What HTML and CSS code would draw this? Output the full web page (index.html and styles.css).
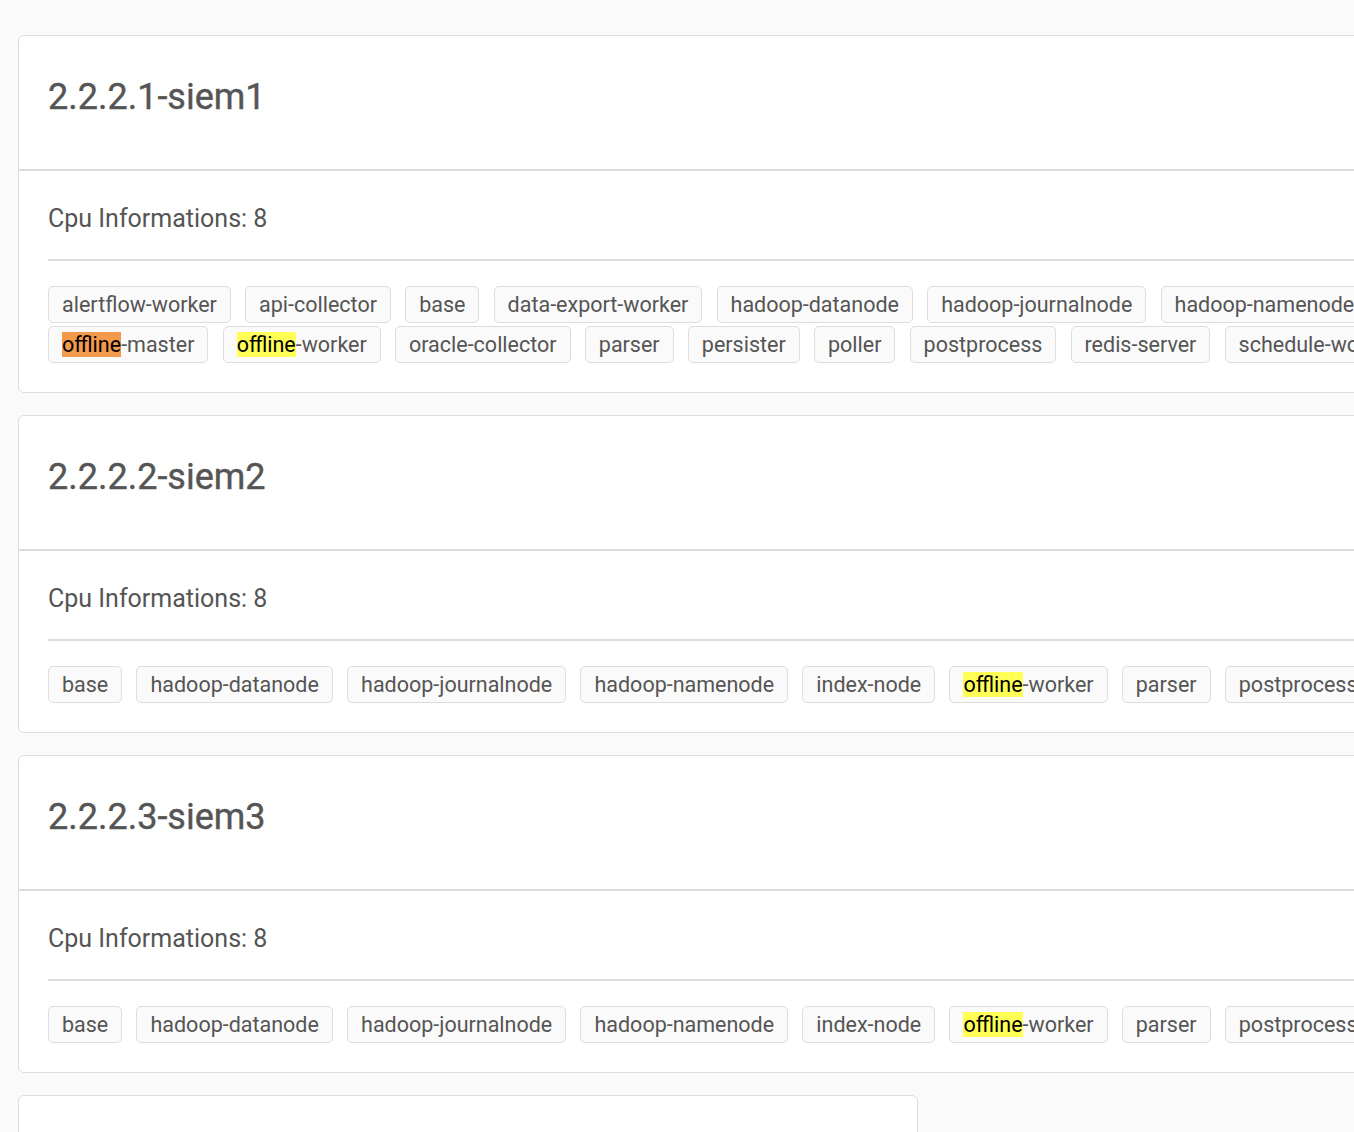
FILE: index.html
```html
<!DOCTYPE html>
<html>
<head>
<meta charset="utf-8">
<link rel="stylesheet" href="styles.css">
</head>
<body>
<div class="page">
  <section class="card card-wide">
    <header class="card-head"><h2 class="card-title">2.2.2.1-siem1</h2></header>
    <div class="card-body">
      <div class="info">Cpu Informations: 8</div>
      <div class="tags">
        <span class="tag">alertflow-worker</span>
        <span class="tag">api-collector</span>
        <span class="tag">base</span>
        <span class="tag">data-export-worker</span>
        <span class="tag">hadoop-datanode</span>
        <span class="tag">hadoop-journalnode</span>
        <span class="tag">hadoop-namenode</span>
        <span class="tag">index-node</span>
        <span class="tag"><mark class="hl hl-current">offline</mark>-master</span>
        <span class="tag"><mark class="hl">offline</mark>-worker</span>
        <span class="tag">oracle-collector</span>
        <span class="tag">parser</span>
        <span class="tag">persister</span>
        <span class="tag">poller</span>
        <span class="tag">postprocess</span>
        <span class="tag">redis-server</span>
        <span class="tag">schedule-worker</span>
        <span class="tag">web</span>
      </div>
    </div>
  </section>
  <section class="card card-wide">
    <header class="card-head"><h2 class="card-title">2.2.2.2-siem2</h2></header>
    <div class="card-body">
      <div class="info">Cpu Informations: 8</div>
      <div class="tags">
        <span class="tag">base</span>
        <span class="tag">hadoop-datanode</span>
        <span class="tag">hadoop-journalnode</span>
        <span class="tag">hadoop-namenode</span>
        <span class="tag">index-node</span>
        <span class="tag"><mark class="hl">offline</mark>-worker</span>
        <span class="tag">parser</span>
        <span class="tag">postprocess</span>
      </div>
    </div>
  </section>
  <section class="card card-wide">
    <header class="card-head"><h2 class="card-title">2.2.2.3-siem3</h2></header>
    <div class="card-body">
      <div class="info">Cpu Informations: 8</div>
      <div class="tags">
        <span class="tag">base</span>
        <span class="tag">hadoop-datanode</span>
        <span class="tag">hadoop-journalnode</span>
        <span class="tag">hadoop-namenode</span>
        <span class="tag">index-node</span>
        <span class="tag"><mark class="hl">offline</mark>-worker</span>
        <span class="tag">parser</span>
        <span class="tag">postprocess</span>
      </div>
    </div>
  </section>
  <section class="card card-narrow">
    <header class="card-head"><h2 class="card-title">&nbsp;</h2></header>
  </section>
</div>
</body>
</html>
```
FILE: styles.css
```css
html, body {
  margin: 0;
  padding: 0;
  background: #fafafa;
  overflow-x: hidden;
}
body {
  font-family: Roboto, "Liberation Sans", Arial, sans-serif;
  color: #555;
}
.page {
  padding: 35px 0 40px 18px;
  display: flex;
  flex-direction: column;
  gap: 22px;
  align-items: flex-start;
}
.card {
  background: #fff;
  border: 1px solid #ddd;
  border-radius: 6px;
  box-sizing: border-box;
  flex-shrink: 0;
}
.card-wide { width: 1580px; }
.card-narrow { width: 900px; }
.card-head {
  padding: 40px 29px 51px;
  border-bottom: 2px solid #ddd;
}
.card-title {
  margin: 0;
  font-size: 36px;
  line-height: 42px;
  font-weight: 400;
  color: #555;
  -webkit-text-stroke: 0.4px #555;
}
.card-body {
  padding: 33px 29px 29px;
}
.info {
  font-size: 25px;
  line-height: 30px;
  color: #555;
  padding-bottom: 25px;
  border-bottom: 2px solid #ddd;
  margin-bottom: 25px;
}
.tags {
  display: flex;
  flex-wrap: wrap;
  gap: 3px 14.2px;
}
.tag {
  display: inline-block;
  font-size: 21.5px;
  line-height: 25px;
  padding: 5px 13px;
  border: 1px solid #ddd;
  border-radius: 5px;
  background: #fafafa;
  color: #555;
  white-space: nowrap;
}
.hl {
  background: #ffff55;
  color: #000;
  padding: 0;
}
.hl-current {
  background: #f39a4a;
}
```
